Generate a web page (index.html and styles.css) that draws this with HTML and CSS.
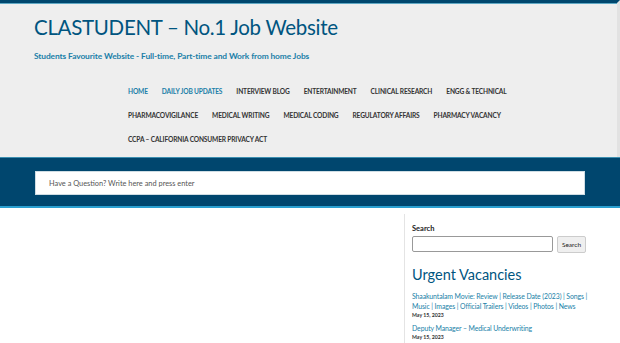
FILE: index.html
```html
<!DOCTYPE html>
<html lang="en">

<head>
    <meta charset="UTF-8">
    <meta name="viewport" content="width=device-width, initial-scale=1.0">
    <title>CLASTUDENT – No.1 Job Website</title>
    <link rel="stylesheet" href="styles.css">
</head>

<body>
    <header class="site-header">
        <div class="branding">
            <h1 class="site-title"><a href="#">CLASTUDENT – No.1 Job Website</a></h1>
            <p class="site-description">Students Favourite Website - Full-time, Part-time and Work from home Jobs</p>
        </div>
        <nav class="main-nav">
            <ul class="menu">
                <li class="current"><a href="#">Home</a></li>
                <li class="current"><a href="#">Daily Job Updates</a></li>
                <li><a href="#">Interview Blog</a></li>
                <li><a href="#">Entertainment</a></li>
                <li><a href="#">Clinical Research</a></li>
                <li><a href="#">Engg &amp; Technical</a></li>
                <li><a href="#">Pharmacovigilance</a></li>
                <li><a href="#">Medical Writing</a></li>
                <li><a href="#">Medical Coding</a></li>
                <li><a href="#">Regulatory Affairs</a></li>
                <li><a href="#">Pharmacy Vacancy</a></li>
                <li><a href="#">CCPA – California Consumer Privacy Act</a></li>
            </ul>
        </nav>
    </header>

    <div class="search-band">
        <input type="text" class="live-search" placeholder="Have a Question? Write here and press enter">
    </div>

    <div class="page">
        <main class="content"></main>

        <aside class="sidebar">
            <div class="widget">
                <label class="widget-label" for="s">Search</label>
                <form class="search-form">
                    <input type="text" id="s">
                    <button type="submit">Search</button>
                </form>
            </div>

            <div class="widget">
                <h2 class="widget-title">Urgent Vacancies</h2>
                <ul class="post-list">
                    <li>
                        <a href="#">Shaakuntalam Movie: Review | Release Date (2023) | Songs | Music | Images | Official Trailers | Videos | Photos | News</a>
                        <span class="post-date">May 15, 2023</span>
                    </li>
                    <li>
                        <a href="#">Deputy Manager – Medical Underwriting</a>
                        <span class="post-date">May 15, 2023</span>
                    </li>
                </ul>
            </div>
        </aside>
    </div>
</body>

</html>
```

FILE: styles.css
```css
body {
    margin: 0;
    padding: 0;
    font-family: Lato, "Open Sans", sans-serif;
    background-color: #fff;
    color: #333;
}

a {
    text-decoration: none;
}

.site-header {
    background-color: #eeeeee;
    border-top: 3px solid #00476e;
    box-shadow: inset 0 1px 0 #5fa8c4;
    border-right: 3px solid #e2e2e2;
    height: 157px;
    box-sizing: border-box;
}

.branding {
    padding: 11px 34px 0;
}

.site-title {
    margin: 0;
    font-size: 20.5px;
    font-weight: 400;
    line-height: 26px;
    letter-spacing: -0.3px;
}

.site-title a {
    color: #005580;
}

.site-description {
    margin: 11px 0 0;
    font-size: 8.4px;
    font-weight: 700;
    color: #1a7fa8;
    letter-spacing: -0.1px;
}

.main-nav {
    margin: 15px 0 0 128px;
    width: 392px;
}

.menu {
    list-style: none;
    margin: 0;
    padding: 0;
    display: flex;
    flex-wrap: wrap;
    column-gap: 14px;
}

.menu li {
    height: 24px;
    line-height: 24px;
}

.menu a {
    font-size: 6.6px;
    font-weight: 700;
    text-transform: uppercase;
    color: #333;
    letter-spacing: -0.15px;
}

.menu .current a {
    color: #1a7fa8;
}

.search-band {
    background-color: #00466e;
    border-top: 1px solid #3d8fb0;
    border-bottom: 2px solid #2a9fd0;
    padding: 13px 35px 11px;
}

.live-search {
    display: block;
    width: 100%;
    box-sizing: border-box;
    height: 24px;
    border: 1px solid #cfdde4;
    padding: 0 13px;
    font-family: Lato, sans-serif;
    font-size: 7.4px;
    background-color: #fff;
}

.live-search::placeholder {
    color: #555;
}

.page {
    display: flex;
    padding-top: 6px;
}

.content {
    flex: 0 0 404px;
}

.sidebar {
    flex: 1;
    min-width: 0;
    border-left: 1px solid #e4e4e4;
    padding: 10px 30px 0 7px;
}

.widget-label {
    display: block;
    font-size: 7.5px;
    font-weight: 700;
    color: #222;
    margin-bottom: 3px;
}

.search-form {
    display: flex;
    gap: 4px;
    margin: 0 4px 0 0;
}

.search-form input {
    flex: 1;
    min-width: 0;
    height: 16px;
    box-sizing: border-box;
    border: 1px solid #999;
    border-radius: 2px;
}

.search-form button {
    height: 17px;
    width: 29px;
    padding: 0;
    font-family: Lato, sans-serif;
    font-size: 6.5px;
    background-color: #efefef;
    border: 1px solid #ccc;
    border-radius: 2px;
    color: #222;
}

.widget-title {
    margin: 12px 0 6px;
    font-size: 14.5px;
    font-weight: 400;
    line-height: 20px;
    color: #00557f;
}

.post-list {
    list-style: none;
    margin: 0;
    padding: 0;
}

.post-list li {
    margin-bottom: 4px;
}

.post-list a {
    display: block;
    font-size: 6.9px;
    line-height: 10px;
    letter-spacing: -0.1px;
    color: #1a7fa8;
}

.post-date {
    display: block;
    font-size: 5.2px;
    line-height: 8px;
    font-weight: 700;
    color: #333;
}
```
